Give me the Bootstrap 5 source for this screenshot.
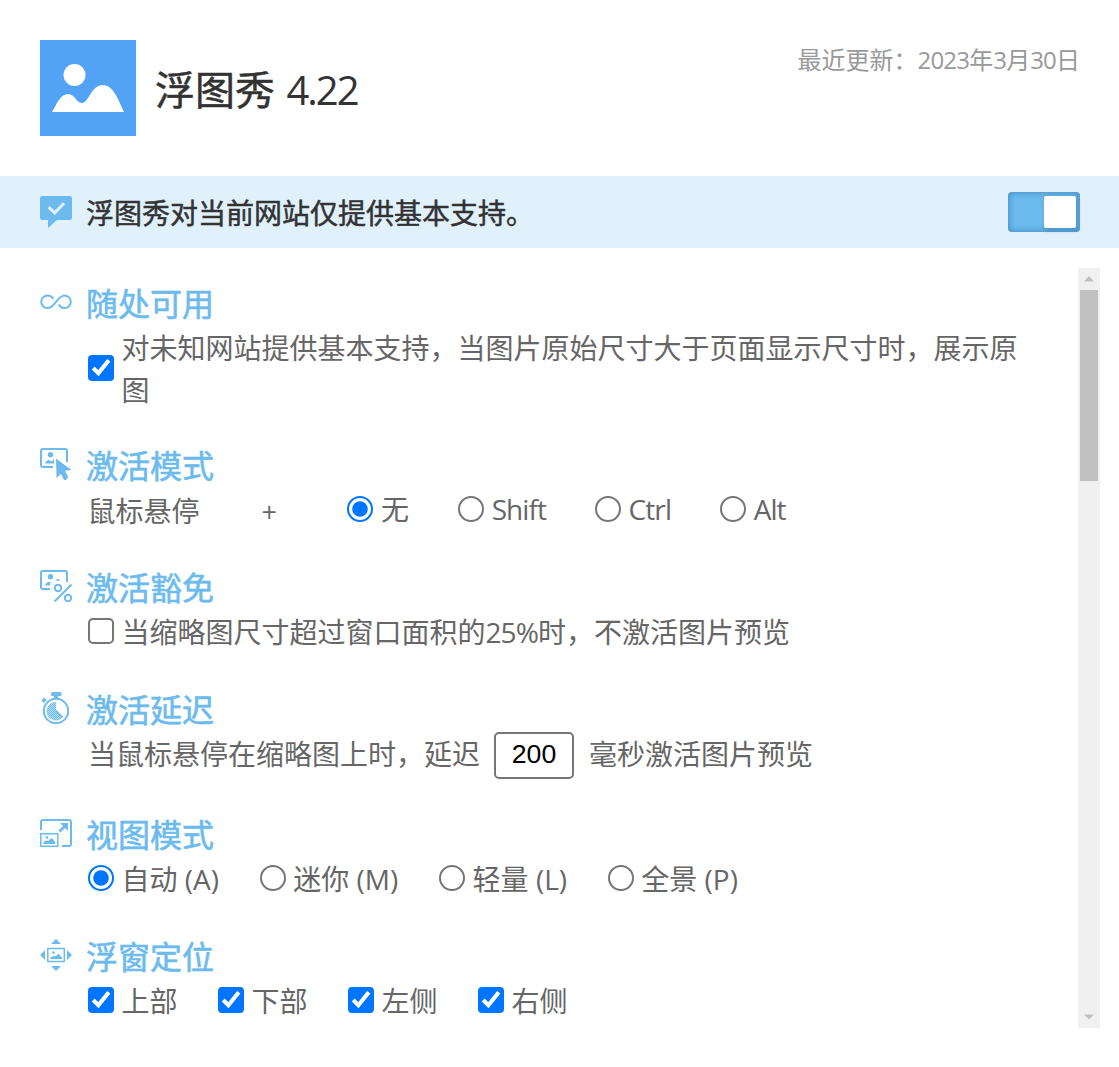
<!DOCTYPE html>
<html lang="zh-CN">
<head>
<meta charset="utf-8">
<meta name="viewport" content="width=device-width, initial-scale=1">
<title>浮图秀</title>
<link href="https://cdn.jsdelivr.net/npm/bootstrap@5.3.0/dist/css/bootstrap.min.css" rel="stylesheet">
<style>
body{font-family:"Open Sans","Noto Sans CJK SC",sans-serif;font-size:28px;line-height:42px;color:#666;background:#fff;overflow:hidden}
svg{display:block;flex:none}
.lt{letter-spacing:-.033em}
.head{height:176px;padding:40px 39px 0 40px}
.head h1{font-size:40px;line-height:60px;font-weight:400;color:#333;margin:20px 0 0 19px;word-spacing:1px;-webkit-text-stroke:.5px #333}
.head h1 .lt{-webkit-text-stroke:0;letter-spacing:-.05em}
.updated{font-size:24px;line-height:36px;color:#999;margin-top:2px}
.status{height:72px;background:#e0f1fc;color:#333;padding:0 39px 0 40px}
.status p{margin:1px 0 0 14px;-webkit-text-stroke:.5px #333}
.toggle{width:72px;height:40px;border-radius:4px;background:#6dbbee;padding:4px;box-shadow:inset 0 0 6px 1px rgba(20,80,130,.42)}
.toggle span{width:32px;height:32px;border-radius:2px;background:#fff;box-shadow:1px 2px 5px rgba(20,70,120,.3)}
.viewport{height:760px;margin:20px 19px 0 0}
.options{padding:16px 40px 0 40px;overflow:hidden}
.opt{height:122px}
.opt-tall{height:162px}
.opt-field{height:125px}
.opt h2{font-size:32px;line-height:40px;font-weight:400;color:#6dbbee;margin:0 0 0 14px;-webkit-text-stroke:.6px #6dbbee}
.opt-icon{margin-bottom:4px}
.opt-body{margin:3px 0 0 48px}
.opt label{display:flex;align-items:center;gap:7.5px}
.opt input[type=checkbox],.opt input[type=radio]{zoom:2;width:13px;height:13px;margin:-1px 0 0;flex:none;accent-color:#0075ff}
.delay{width:80px;height:47px;margin:-1px 15px -3px 14px;border:2px solid #767676;border-radius:5px;text-align:center;font:26.67px "Liberation Sans",sans-serif;color:#000;padding:0 0 2px}
.hover-name{margin:1px 0 0 -.5px}
.plus{width:16px;margin:2px 69.5px 0 62px;font-size:27px}
.track{width:22px;background:#f0f0f0;padding:0 2px}
.thumb{height:191px;background:#c1c1c1;margin-top:22px}
.g48{gap:48px}
.g48 label{height:42px;gap:8px}
.g48 span{padding-bottom:3px;margin-right:.6px}
.g40{gap:40px}
.g40 label{margin-right:.5px}
.views label{margin-right:.8px}
.views .lt{letter-spacing:0}
.rail{position:relative}
.rail svg{position:absolute;left:6px}
.rail .up{top:8px}.rail .down{bottom:8px}
</style>
<script src="https://cdn.jsdelivr.net/npm/bootstrap@5.3.0/dist/js/bootstrap.bundle.min.js"></script>
</head>
<body>
<header class="head d-flex align-items-start">
  <svg width="96" height="96" viewBox="0 0 96 96"><path fill="#52a2f6" d="M0 0h96v96H0z"/><circle cx="34.5" cy="35" r="11" fill="#fff"/><path fill="#fff" d="M12 72C17 63 21 54 28 54c7 0 8 9 14 9 7 0 9-18 21-18 10 0 15 14 21 27z"/></svg>
  <h1>浮图秀 <span class="lt">4.22</span></h1>
  <div class="updated ms-auto">最近更新：<span class="lt">2023</span>年<span class="lt">3</span>月<span class="lt">30</span>日</div>
</header>
<div class="status d-flex align-items-center">
  <svg width="32" height="32" viewBox="0 0 32 32"><path fill="#6dbbee" d="M2 0h28q2 0 2 2v20q0 2-2 2H17l-9 8v-8H2q-2 0-2-2V2q0-2 2-2z"/><path fill="none" stroke="#e0f1fc" stroke-width="3" d="m8.7 11.2 6 5.6 9.3-9.6"/></svg>
  <p>浮图秀对当前网站仅提供基本支持。</p>
  <div class="toggle ms-auto d-flex justify-content-end"><span></span></div>
</div>
<div class="viewport d-flex">
<main class="options flex-grow-1">
  <section class="opt opt-tall">
    <div class="d-flex align-items-center">
      <svg class="opt-icon" width="32" height="32" viewBox="0 0 32 32" fill="none" stroke="#6dbbee" stroke-width="2"><path stroke-linecap="round" d="M12.800 12.200C11.500 10 9.700 9.500 7.500 9.500a6.300 6.300 0 0 0 0 12.600c7.200 0 9.800-12.600 17-12.600a6.300 6.300 0 0 1 0 12.600c-2.200 0-4-1-5.300-3"/></svg>
      <h2>随处可用</h2>
    </div>
    <div class="opt-body"><label><input type="checkbox" checked><span>对未知网站提供基本支持，当图片原始尺寸大于页面显示尺寸时，展示原图</span></label></div>
  </section>
  <section class="opt">
    <div class="d-flex align-items-center">
      <svg class="opt-icon" width="32" height="32" viewBox="0 0 32 32" fill="#6dbbee"><path fill="none" stroke="#6dbbee" stroke-width="2" d="M13 19H3q-2 0-2-2V3q0-2 2-2h22q2 0 2 2v11"/><circle cx="10.500" cy="6.800" r="2.700"/><path d="M5 15.500c1-2 2-3.500 3.500-3.500s2 1.500 3 1.200q1-.3 2.500-2.200v4.500zM16 10.500l15.500 11.500-6.500.8 3.200 6.500-2.200 2.700h-2l-3-6-4.500 4z"/></svg>
      <h2>激活模式</h2>
    </div>
    <div class="opt-body d-flex"><span class="hover-name">鼠标悬停</span><span class="plus">+</span>
      <div class="d-flex g48">
        <label><input type="radio" name="k" checked><span>无</span></label>
        <label><input type="radio" name="k"><span class="lt">Shift</span></label>
        <label><input type="radio" name="k"><span class="lt">Ctrl</span></label>
        <label><input type="radio" name="k"><span class="lt">Alt</span></label>
      </div>
    </div>
  </section>
  <section class="opt">
    <div class="d-flex align-items-center">
      <svg class="opt-icon" width="32" height="32" viewBox="0 0 32 32" fill="#6dbbee"><path fill="none" stroke="#6dbbee" stroke-width="2" d="M10 19H3q-2 0-2-2V3q0-2 2-2h22q2 0 2 2v9"/><circle cx="10.500" cy="6.800" r="2.700"/><path d="M5 15.500c1-2 2-3.500 3.500-3.500h2.500c-1 1-1 2.500-1 3.500zM16 10q2-2 4 .2l-1 .8q-1.500-1-3-.3z"/><g fill="none" stroke="#6dbbee" stroke-width="2"><circle cx="18" cy="18" r="3.200"/><circle cx="28" cy="28" r="3.200"/><path d="M31.500 14.500 14.500 31.500"/></g></svg>
      <h2>激活豁免</h2>
    </div>
    <div class="opt-body"><label><input type="checkbox"><span>当缩略图尺寸超过窗口面积的<span class="lt">25%</span>时，不激活图片预览</span></label></div>
  </section>
  <section class="opt opt-field">
    <div class="d-flex align-items-center">
      <svg class="opt-icon" width="32" height="32" viewBox="0 0 32 32" fill="#6dbbee"><defs><pattern id="dots" width="2" height="2" patternUnits="userSpaceOnUse"><path d="M0 0h2v2H0z" fill="#b5dcf6"/><path d="M0 0h1v1H0zM1 1h1v1H1z" fill="#6dbbee"/></pattern></defs><circle cx="16" cy="19" r="12.200" fill="none" stroke="#6dbbee" stroke-width="2"/><path d="M13 0h7q1.500 0 1.500 1.500V3q0 1-1.500 1h-2v3h-4V4h-1.500Q11 4 11 3V1.500Q11 0 13 0zM3.500 5.500 7 8 3.500 11 2.500 9.500l-1-.5z"/><path fill="url(#dots)" d="M16 10v9l6.500 6.500A9.200 9.200 0 1 1 16 10z"/><path fill="none" stroke="#6dbbee" stroke-width="2" d="m15.500 18.500 7 7"/></svg>
      <h2>激活延迟</h2>
    </div>
    <div class="opt-body d-flex"><span>当鼠标悬停在缩略图上时，延迟</span><input class="delay" type="text" value="200"><span>毫秒激活图片预览</span></div>
  </section>
  <section class="opt">
    <div class="d-flex align-items-center">
      <svg class="mb-1 mt-1" width="32" height="32" viewBox="0 0 32 32" fill="#6dbbee"><g fill="none" stroke="#6dbbee"><path stroke-width="2" d="M1 11V3q0-2 2-2h26q2 0 2 2v22q0 2-2 2h-7"/><path stroke-width="1.500" d="M.8 14.800h17v12.500H.8z"/><path stroke-width="3" d="m19.500 12.500 7-7"/></g><path d="M20 4h8v8zM3.500 25v-2q3-2.500 5-1 2-3 3.500-3l3 4v2z"/><circle cx="7" cy="18.500" r="1.300"/></svg>
      <h2>视图模式</h2>
    </div>
    <div class="opt-body d-flex g40 views">
      <label><input type="radio" name="v" checked><span>自动 <span class="lt">(A)</span></span></label>
      <label><input type="radio" name="v"><span>迷你 <span class="lt">(M)</span></span></label>
      <label><input type="radio" name="v"><span>轻量 <span class="lt">(L)</span></span></label>
      <label><input type="radio" name="v"><span>全景 <span class="lt">(P)</span></span></label>
    </div>
  </section>
  <section class="opt">
    <div class="d-flex align-items-center">
      <svg class="opt-icon" width="32" height="32" viewBox="0 0 32 32" fill="#6dbbee"><path d="m16 0 5 5H11zM16 32l5-5H11zM0 16l5-5v10zM32 16l-5-5v10z"/><path fill="none" stroke="#6dbbee" stroke-width="1.500" d="M7.800 9.500h16.500v13H7.800z"/><circle cx="13.500" cy="13.500" r="1.300"/><path d="M10.500 20v-1.500q3-2.500 5-1 2-3 3.500-2.500l3 3.500V20z"/></svg>
      <h2>浮窗定位</h2>
    </div>
    <div class="opt-body d-flex g40">
      <label><input type="checkbox" checked><span>上部</span></label>
      <label><input type="checkbox" checked><span>下部</span></label>
      <label><input type="checkbox" checked><span>左侧</span></label>
      <label><input type="checkbox" checked><span>右侧</span></label>
    </div>
  </section>
</main>
<div class="track rail">
  <svg class="up" width="10" height="6" viewBox="0 0 10 6"><path fill="#c1c1c1" d="M5 0l5 5.500H0z"/></svg>
  <div class="thumb"></div>
  <svg class="down" width="10" height="6" viewBox="0 0 10 6"><path fill="#c1c1c1" d="M5 5.500 10 .5H0z"/></svg>
</div>
</div>
</body>
</html>
